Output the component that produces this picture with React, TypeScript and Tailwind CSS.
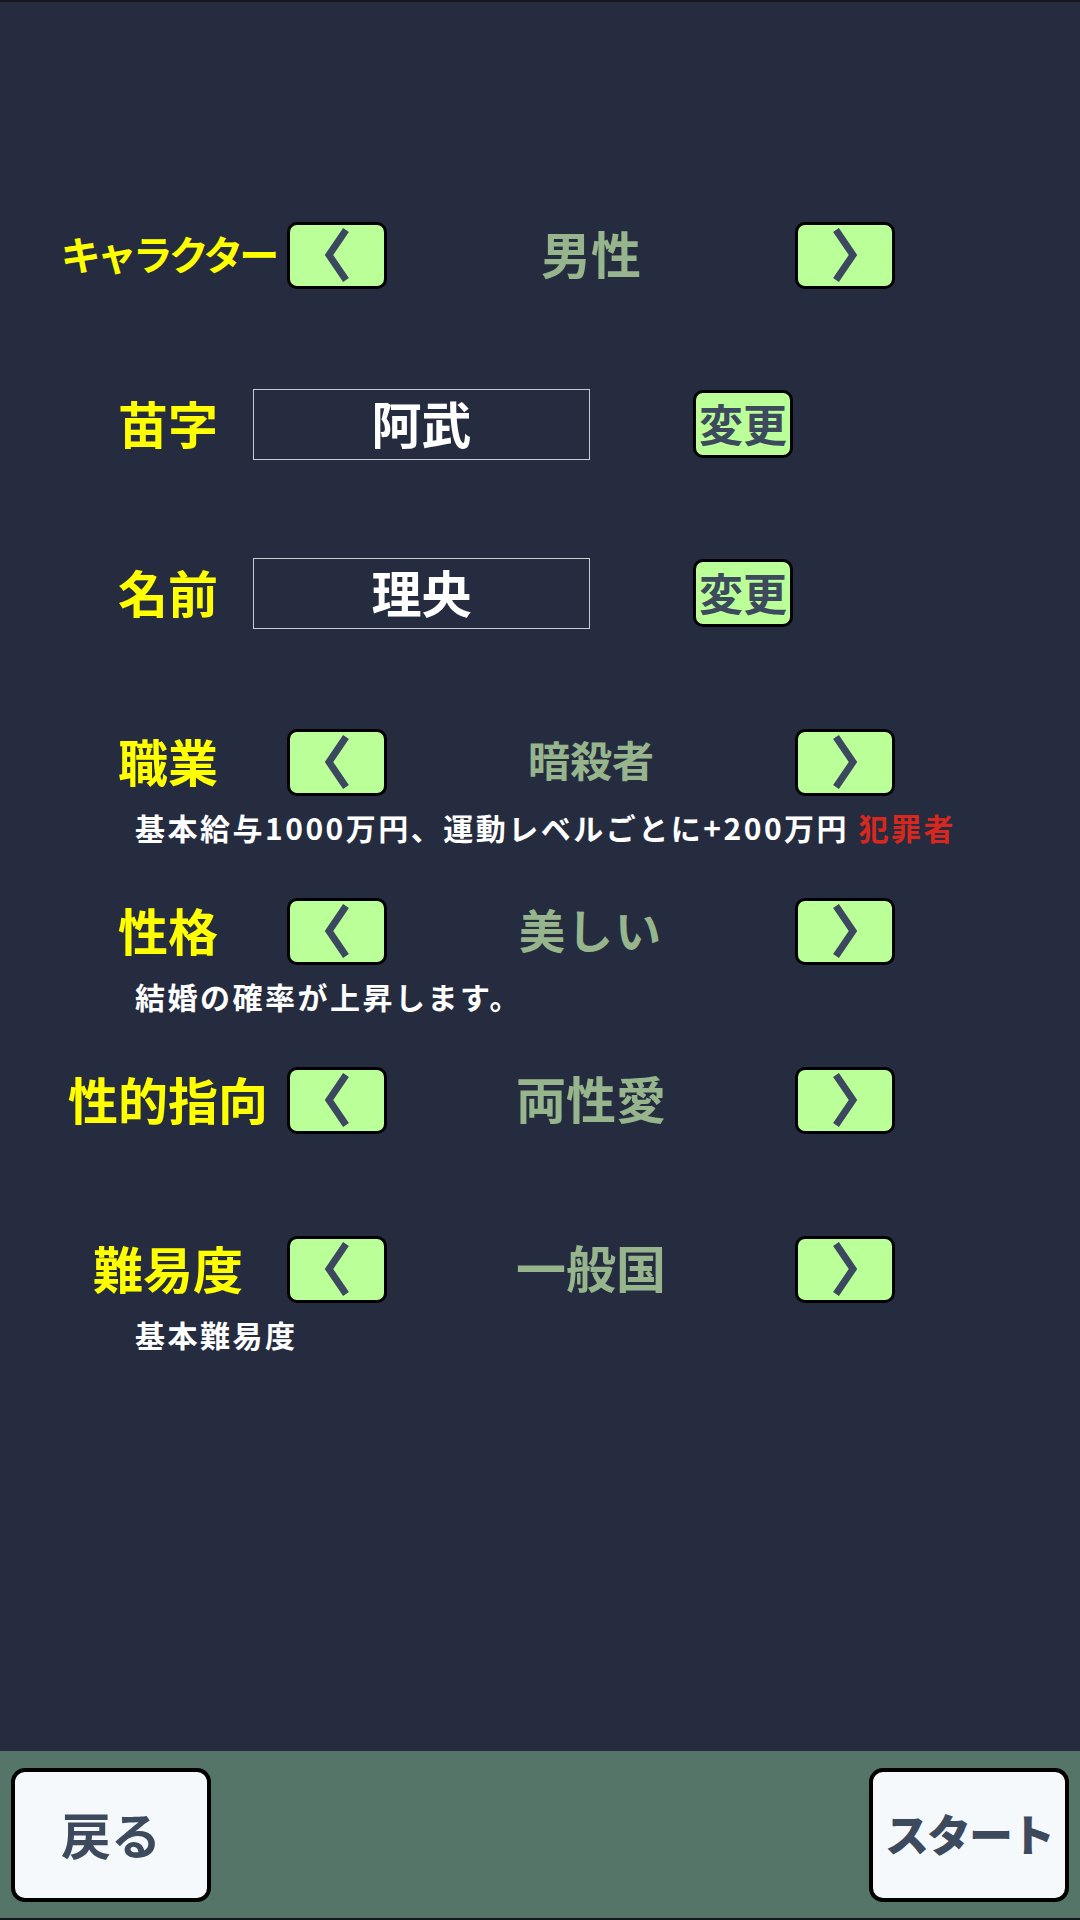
import React from "react";

const font = { fontFamily: '"Noto Sans CJK JP", "Noto Sans", sans-serif' };

function Chevron({ dir }: { dir: "left" | "right" }) {
  const points = dir === "left" ? "23,3 6,28 23,53" : "5,3 22,28 5,53";
  return (
    <svg width="28" height="56" viewBox="0 0 28 56" fill="none">
      <polyline points={points} stroke="#3b4860" strokeWidth="7" strokeLinejoin="miter" />
    </svg>
  );
}

function ArrowButton({ dir }: { dir: "left" | "right" }) {
  return (
    <button
      type="button"
      className="flex h-[67px] w-[100px] shrink-0 items-center justify-center rounded-[10px] border-[3px] border-black bg-[#bbff99]"
    >
      <Chevron dir={dir} />
    </button>
  );
}

function SelectRow({
  label,
  value,
  labelClass = "text-[50px]",
  valueClass = "text-[50px]",
  note,
}: {
  label: string;
  value: string;
  labelClass?: string;
  valueClass?: string;
  note?: React.ReactNode;
}) {
  return (
    <div className="flex h-[169px] flex-col">
      <div className="flex h-[68px] items-center">
        <div className={`ml-[56px] w-[224px] whitespace-nowrap pb-[5px] text-center font-bold leading-none text-[#ffff00] ${labelClass}`}>
          {label}
        </div>
        <div className="ml-[7px]">
          <ArrowButton dir="left" />
        </div>
        <div className={`w-[408px] pb-[7px] text-center font-bold leading-none text-[#97b58c] ${valueClass}`}>{value}</div>
        <ArrowButton dir="right" />
      </div>
      {note && (
        <div className="mt-[16px] whitespace-nowrap pl-[135px] text-[30px] font-bold leading-[30px] tracking-[2.5px] text-white">
          {note}
        </div>
      )}
    </div>
  );
}

function InputRow({ label, value }: { label: string; value: string }) {
  return (
    <div className="flex h-[169px] flex-col">
      <div className="flex h-[68px] items-center">
        <div className="ml-[86px] w-[164px] pb-[5px] text-center text-[50px] font-bold leading-none text-[#ffff00]">{label}</div>
        <div className="ml-[3px] flex h-[71px] w-[337px] shrink-0 items-center justify-center border-[1.5px] border-[#c9ccd3] pb-[4px] text-[50px] font-bold leading-none text-white">
          {value}
        </div>
        <button
          type="button"
          className="ml-[103px] flex h-[68px] w-[100px] shrink-0 items-center justify-center rounded-[10px] border-[3px] border-black bg-[#bbff99] pb-[3px] text-[44px] font-bold leading-none text-[#3d4a5e]"
        >
          変更
        </button>
      </div>
    </div>
  );
}

export default function App() {
  return (
    <div className="flex h-[1920px] w-[1080px] flex-col overflow-hidden bg-[#252c3f]" style={font}>
      <div className="h-[2px] bg-[#14171d]" />
      <main className="flex flex-1 flex-col pt-[219px]">
        <SelectRow label="キャラクター" value="男性" labelClass="text-[40px] font-black tracking-[-4px]" />
        <InputRow label="苗字" value="阿武" />
        <InputRow label="名前" value="理央" />
        <SelectRow
          label="職業"
          value="暗殺者"
          valueClass="text-[42px]"
          note={
            <>
              基本給与1000万円、運動レベルごとに+200万円 <span className="text-[#d6281f]">犯罪者</span>
            </>
          }
        />
        <SelectRow label="性格" value="美しい" valueClass="text-[46px] tracking-[2px]" note="結婚の確率が上昇します。" />
        <SelectRow label="性的指向" value="両性愛" />
        <SelectRow label="難易度" value="一般国" note="基本難易度" />
      </main>
      <footer className="flex h-[169px] items-center justify-between border-b-[2px] border-[#14171d] bg-[#547567] px-[11px]">
        <button
          type="button"
          className="flex h-[134px] w-[200px] items-center justify-center rounded-[14px] border-[4px] border-black bg-[#f5f9fc] pb-[4px] text-[50px] font-bold leading-none text-[#3d4a5e]"
        >
          戻る
        </button>
        <button
          type="button"
          className="flex h-[134px] w-[200px] items-center justify-center rounded-[14px] border-[4px] border-black bg-[#f5f9fc] pb-[4px] text-[44px] font-black leading-none tracking-[-2px] text-[#3d4a5e]"
        >
          スタート
        </button>
      </footer>
    </div>
  );
}
